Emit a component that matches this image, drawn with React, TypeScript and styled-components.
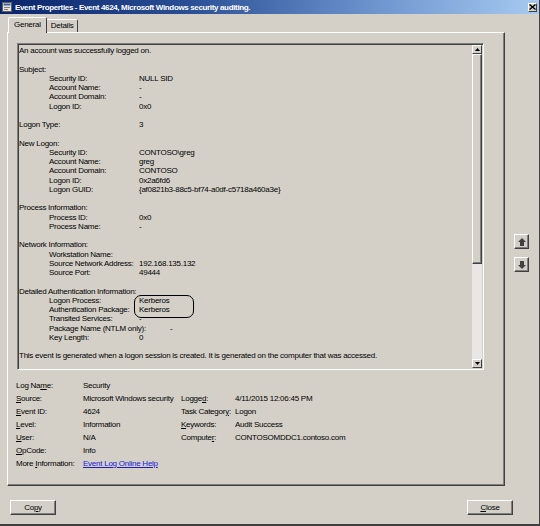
import styled, { createGlobalStyle } from "styled-components"

const GlobalStyle = createGlobalStyle`
    html, body {
        margin: 0;
        padding: 0;
        background: #d4d0c8;
    }
    body {
        font-family: "Liberation Sans", Arial, sans-serif;
        color: #000;
    }
`

type Line = { label?: string; value?: string; indent?: boolean; valueAt?: number; text?: string }

const lines: Line[] = [
    { text: "An account was successfully logged on." },
    {},
    { label: "Subject:" },
    { label: "Security ID:", value: "NULL SID", indent: true },
    { label: "Account Name:", value: "-", indent: true },
    { label: "Account Domain:", value: "-", indent: true },
    { label: "Logon ID:", value: "0x0", indent: true },
    {},
    { label: "Logon Type:", value: "3" },
    {},
    { label: "New Logon:" },
    { label: "Security ID:", value: "CONTOSO\\greg", indent: true },
    { label: "Account Name:", value: "greg", indent: true },
    { label: "Account Domain:", value: "CONTOSO", indent: true },
    { label: "Logon ID:", value: "0x2a6fd6", indent: true },
    { label: "Logon GUID:", value: "{af0821b3-88c5-bf74-a0df-c5718a460a3e}", indent: true },
    {},
    { label: "Process Information:" },
    { label: "Process ID:", value: "0x0", indent: true },
    { label: "Process Name:", value: "-", indent: true },
    {},
    { label: "Network Information:" },
    { label: "Workstation Name:", value: "", indent: true },
    { label: "Source Network Address:", value: "192.168.135.132", indent: true },
    { label: "Source Port:", value: "49444", indent: true },
    {},
    { label: "Detailed Authentication Information:" },
    { label: "Logon Process:", value: "Kerberos", indent: true },
    { label: "Authentication Package:", value: "Kerberos", indent: true },
    { label: "Transited Services:", value: "-", indent: true },
    { label: "Package Name (NTLM only):", value: "-", indent: true, valueAt: 121 },
    { label: "Key Length:", value: "0", indent: true },
    {},
    { text: "This event is generated when a logon session is created. It is generated on the computer that was accessed." },
]

export default function App() {
    return (
        <>
            <GlobalStyle />
            <Window>
                <TitleBar>
                    <WinIcon viewBox="0 0 10 10">
                        <rect x="0.5" y="0.5" width="9" height="9" fill="#e8e4dc" stroke="#606060" />
                        <rect x="1.5" y="1.5" width="7" height="2" fill="#3a5fa8" />
                        <rect x="2" y="5" width="6" height="1" fill="#808080" />
                        <rect x="2" y="7" width="4" height="1" fill="#808080" />
                    </WinIcon>
                    <Title>Event Properties - Event 4624, Microsoft Windows security auditing.</Title>
                    <CaptionButton>
                        <svg width="7" height="6" viewBox="0 0 7 6">
                            <path d="M0.5 0.5 L6.5 5.5 M6.5 0.5 L0.5 5.5" stroke="#000" strokeWidth="1.4" />
                        </svg>
                    </CaptionButton>
                </TitleBar>
                <Content>
                    <Main>
                        <TabArea>
                            <TabRow>
                                <Tab $active>General</Tab>
                                <Tab>Details</Tab>
                            </TabRow>
                            <TabPanel>
                                <TextBox>
                                    <TextContent>
                                        {lines.map((l, i) =>
                                            l.text ? (
                                                <TextLine key={i}>{l.text}</TextLine>
                                            ) : (
                                                <TextLine key={i} $indent={l.indent}>
                                                    {l.label && (
                                                        <LineLabel $width={l.valueAt ?? (l.indent ? 90 : 120)}>
                                                            {l.label}
                                                        </LineLabel>
                                                    )}
                                                    {l.value && <span>{l.value}</span>}
                                                </TextLine>
                                            )
                                        )}
                                        <Circled />
                                    </TextContent>
                                    <ScrollBar>
                                        <ScrollArrow>
                                            <svg width="5" height="3" viewBox="0 0 5 3"><path d="M2.5 0 L5 3 L0 3 Z" fill="#000" /></svg>
                                        </ScrollArrow>
                                        <Thumb />
                                        <Track />
                                        <ScrollArrow>
                                            <svg width="5" height="3" viewBox="0 0 5 3"><path d="M0 0 L5 0 L2.5 3 Z" fill="#000" /></svg>
                                        </ScrollArrow>
                                    </ScrollBar>
                                </TextBox>
                                <InfoGrid>
                                    <span>Log Na<u>m</u>e:</span><span>Security</span><span /><span />
                                    <span><u>S</u>ource:</span><span>Microsoft Windows security</span><span>Logge<u>d</u>:</span><span>4/11/2015 12:06:45 PM</span>
                                    <span><u>E</u>vent ID:</span><span>4624</span><span>Task Categor<u>y</u>:</span><span>Logon</span>
                                    <span><u>L</u>evel:</span><span>Information</span><span><u>K</u>eywords:</span><span>Audit Success</span>
                                    <span><u>U</u>ser:</span><span>N/A</span><span>Compute<u>r</u>:</span><span>CONTOSOMDDC1.contoso.com</span>
                                    <span><u>O</u>pCode:</span><span>Info</span><span /><span />
                                    <span>More <u>I</u>nformation:</span><HelpLink>Event Log Online Help</HelpLink><span /><span />
                                </InfoGrid>
                            </TabPanel>
                        </TabArea>
                        <SideColumn>
                            <SideButton>
                                <svg width="8" height="8" viewBox="0 0 8 8"><path d="M4 0 L8 4 L6 4 L6 8 L2 8 L2 4 L0 4 Z" fill="#404040" /></svg>
                            </SideButton>
                            <SideButton>
                                <svg width="8" height="8" viewBox="0 0 8 8"><path d="M2 0 L6 0 L6 4 L8 4 L4 8 L0 4 L2 4 Z" fill="#404040" /></svg>
                            </SideButton>
                        </SideColumn>
                    </Main>
                    <Footer>
                        <Button>Co<u>p</u>y</Button>
                        <Button><u>C</u>lose</Button>
                    </Footer>
                </Content>
            </Window>
        </>
    )
}

const Window = styled.div`
    width: 540px;
    height: 526px;
    box-sizing: border-box;
    background: #d4d0c8;
    border-right: 1px solid #404040;
    border-bottom: 2px solid #404040;
    display: flex;
    flex-direction: column;
    font-size: 8px;
    letter-spacing: -0.25px;
`

const TitleBar = styled.div`
    height: 14px;
    display: flex;
    align-items: center;
    gap: 3px;
    padding: 0 2px 0 2px;
    background: linear-gradient(to right, #0a246a 0%, #2a4f95 35%, #6f95cf 70%, #a6caf0 100%);
`

const WinIcon = styled.svg`
    width: 10px;
    height: 10px;
    flex: none;
`

const Title = styled.div`
    flex: 1;
    color: #fff;
    font-weight: bold;
    font-size: 8px;
    letter-spacing: -0.35px;
    white-space: nowrap;
`

const CaptionButton = styled.div`
    width: 9px;
    height: 9px;
    box-sizing: border-box;
    display: flex;
    align-items: center;
    justify-content: center;
    background: #d4d0c8;
    border: 1px solid;
    border-color: #fff #404040 #404040 #fff;
`

const Content = styled.div`
    flex: 1;
    display: flex;
    flex-direction: column;
    padding: 3px 0 0 7px;
`

const Main = styled.div`
    display: flex;
`

const TabArea = styled.div`
    width: 498px;
    flex: none;
    display: flex;
    flex-direction: column;
`

const TabRow = styled.div`
    height: 15px;
    display: flex;
    align-items: flex-end;
    padding-left: 3px;
`

const Tab = styled.div<{ $active?: boolean }>`
    position: relative;
    box-sizing: border-box;
    height: ${p => (p.$active ? "16px" : "13px")};
    margin: ${p => (p.$active ? "0 -1px -1px -2px" : "0")};
    padding: ${p => (p.$active ? "2px 5px 0" : "1px 4px 0")};
    background: #d4d0c8;
    border: 1px solid;
    border-color: #fff #404040 transparent #fff;
    border-bottom: none;
    border-radius: 2px 2px 0 0;
    z-index: ${p => (p.$active ? 1 : 0)};
    line-height: 10px;
`

const TabPanel = styled.div`
    height: 454px;
    box-sizing: border-box;
    border: 1px solid;
    border-color: #fff #404040 #404040 #fff;
    box-shadow: inset -1px -1px #808080;
    padding: 10px 20px 0 9px;
    display: flex;
    flex-direction: column;
`

const TextBox = styled.div`
    height: 327px;
    box-sizing: border-box;
    display: flex;
    border: 1px solid;
    border-color: #808080 #fff #fff #808080;
    box-shadow: inset 1px 1px #404040, inset -1px -1px #d4d0c8;
    padding: 1px;
`

const TextContent = styled.div`
    flex: 1;
    position: relative;
    overflow: hidden;
    padding: 1px 0 0 0;
    line-height: 9.25px;
    white-space: nowrap;
`

const TextLine = styled.div<{ $indent?: boolean }>`
    height: 9.25px;
    display: flex;
    padding-left: ${p => (p.$indent ? "30px" : "0")};
`

const LineLabel = styled.span<{ $width: number }>`
    width: ${p => p.$width}px;
    flex: none;
`

const Circled = styled.div`
    position: absolute;
    left: 115px;
    top: 250px;
    width: 60px;
    height: 23px;
    box-sizing: border-box;
    border: 1.5px solid #000;
    border-radius: 7px;
`

const ScrollBar = styled.div`
    width: 10px;
    flex: none;
    display: flex;
    flex-direction: column;
`

const ScrollArrow = styled.div`
    height: 9px;
    box-sizing: border-box;
    display: flex;
    align-items: center;
    justify-content: center;
    background: #d4d0c8;
    border: 1px solid;
    border-color: #fff #404040 #404040 #fff;
`

const Thumb = styled.div`
    height: 210px;
    box-sizing: border-box;
    background: #d4d0c8;
    border: 1px solid;
    border-color: #fff #404040 #404040 #fff;
    box-shadow: inset -1px -1px #808080;
`

const Track = styled.div`
    flex: 1;
    background: #e9e7e3;
`

const InfoGrid = styled.div`
    display: grid;
    grid-template-columns: 67px 98px 54px 1fr;
    grid-auto-rows: 13px;
    align-items: center;
    margin: 9px 0 0 -1px;
    white-space: nowrap;
`

const HelpLink = styled.span`
    color: #1a1ad8;
    text-decoration: underline;
`

const SideColumn = styled.div`
    display: flex;
    flex-direction: column;
    gap: 8px;
    padding: 217px 0 0 9px;
`

const SideButton = styled.div`
    width: 15px;
    height: 15px;
    box-sizing: border-box;
    display: flex;
    align-items: center;
    justify-content: center;
    background: #d4d0c8;
    border: 1px solid;
    border-color: #fff #404040 #404040 #fff;
    box-shadow: inset -1px -1px #808080;
`

const Footer = styled.div`
    display: flex;
    justify-content: space-between;
    margin-top: 14px;
    padding: 0 26px 0 3px;
`

const Button = styled.div`
    width: 46px;
    height: 15px;
    box-sizing: border-box;
    display: flex;
    align-items: center;
    justify-content: center;
    background: #d4d0c8;
    border: 1px solid;
    border-color: #fff #404040 #404040 #fff;
    box-shadow: inset -1px -1px #808080;
`
